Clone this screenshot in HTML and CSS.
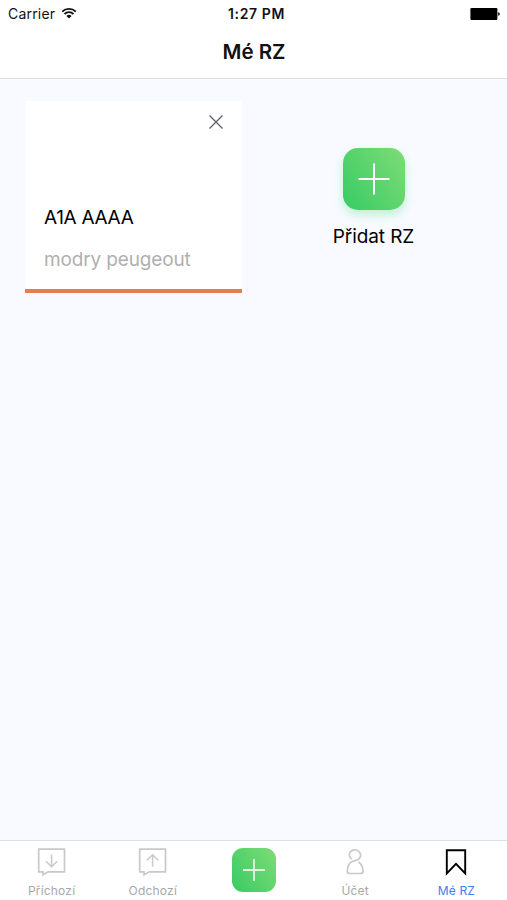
FILE: index.html
```html
<!DOCTYPE html>
<html lang="cs">
  <head>
    <meta charset="UTF-8" />
    <meta name="viewport" content="width=device-width, initial-scale=1.0" />
    <title>Mé RZ</title>
    <link rel="stylesheet" href="styles.css">
  </head>
  <body>
    <header class="header">
      <div class="status">
        <div class="carrier">
          <span>Carrier</span>
          <svg class="wifi" width="16" height="12" viewBox="0 0 16 12">
            <path d="M1.2 4.6a9.8 9.8 0 0 1 13.6 0M3.5 7a6.5 6.5 0 0 1 9 0" fill="none" stroke="#111" stroke-width="1.8" />
            <path d="M8 11.6 5.4 8.9a3.8 3.8 0 0 1 5.2 0z" fill="#111" />
          </svg>
        </div>
        <div class="time">1:27 PM</div>
        <div class="battery">
          <svg width="30" height="12" viewBox="0 0 30 12">
            <rect x="0.4" y="0" width="27" height="12" rx="1.2" fill="#000" />
            <path d="M28.2 4.2q1.6.3 1.6 1.8t-1.6 1.8z" fill="#000" />
          </svg>
        </div>
      </div>
      <h1 class="title">Mé RZ</h1>
    </header>

    <main class="content">
      <div class="card">
        <button class="close" aria-label="Smazat">
          <svg width="14" height="14" viewBox="0 0 14 14">
            <path d="M.5.5l13 13M13.5.5l-13 13" fill="none" stroke="#5d5f66" stroke-width="1.3" />
          </svg>
        </button>
        <div class="plate">A1A AAAA</div>
        <div class="note">modry peugeout</div>
      </div>
      <div class="add">
        <div class="add-icon">
          <svg width="32" height="32" viewBox="0 0 32 32">
            <path d="M16 .5v31M.5 16h31" stroke="#fff" stroke-width="2" />
          </svg>
        </div>
        <div class="add-label">Přidat RZ</div>
      </div>
    </main>

    <nav class="tabs">
      <a class="tab">
        <svg width="30" height="30" viewBox="0 0 30 30">
          <path d="M1.7 2.2h25.8v22.6H11.2L6 27.8v-3H1.7z" fill="none" stroke="#c9c9c9" stroke-width="1.7" />
          <path d="M14.6 7.600v12M9 14.200l5.600 5.500 5.600-5.500" fill="none" stroke="#c9c9c9" stroke-width="1.500" />
        </svg>
        <span>Příchozí</span>
      </a>
      <a class="tab">
        <svg width="30" height="30" viewBox="0 0 30 30">
          <path d="M1.7 2.2h25.8v22.6H11.2L6 27.8v-3H1.7z" fill="none" stroke="#c9c9c9" stroke-width="1.7" />
          <path d="M14.6 19.8v-12M9 13.2l5.6-5.5 5.6 5.5" fill="none" stroke="#c9c9c9" stroke-width="1.5" />
        </svg>
        <span>Odchozí</span>
      </a>
      <a class="tab tab-add">
        <div class="tab-add-icon">
          <svg width="22" height="22" viewBox="0 0 22 22">
            <path d="M11 0v22M0 11h22" stroke="#e0fadf" stroke-width="1.8" />
          </svg>
        </div>
      </a>
      <a class="tab">
        <svg width="30" height="30" viewBox="0 0 30 30">
          <path d="M11.7 12.2C9 9.9 8.7 6.7 10.5 4.6C12.5 2.3 16.5 2.2 18.8 4.3C21.2 6.6 21.2 10.2 18.7 12.2C17 13.7 14.5 13.4 12.2 14.5C8.800 16 7.400 19.500 7.300 24.500Q7.300 26.500 9.500 26.500H20.500Q23 26.500 23 24.500C23 20.500 21.800 17.200 18.500 15" fill="none" stroke="#c9c9c9" stroke-width="1.7" />
        </svg>
        <span>Účet</span>
      </a>
      <a class="tab active">
        <svg width="30" height="30" viewBox="0 0 30 30">
          <path d="M5.8 3.2h18.4v23.2L15 16.8 5.8 26.4z" fill="none" stroke="#000" stroke-width="1.9" />
        </svg>
        <span>Mé RZ</span>
      </a>
    </nav>
  </body>
</html>
```
FILE: styles.css
```css
* {
  box-sizing: border-box;
}

body {
  margin: 0;
  height: 100vh;
  display: flex;
  flex-direction: column;
  font-family: Inter, "Liberation Sans", sans-serif;
  background-color: #f8faff;
  color: #111;
}

.header {
  height: 79px;
  background-color: #fff;
  border-bottom: 1px solid #dcdee2;
}

.status {
  display: grid;
  grid-template-columns: 1fr auto 1fr;
  align-items: center;
  height: 27px;
  padding: 0 7px 0 8px;
  font-size: 14px;
}

.carrier {
  display: flex;
  align-items: center;
  gap: 6px;
  letter-spacing: 0.2px;
}

.wifi {
  margin-bottom: 2px;
}

.time {
  padding-left: 5px;
  font-weight: 600;
  letter-spacing: 0.6px;
}

.battery {
  display: flex;
  justify-content: flex-end;
}

.title {
  margin: 0;
  padding-left: 1px;
  font-size: 20.5px;
  font-weight: 600;
  line-height: 50px;
  text-align: center;
}

.content {
  flex: 1;
  display: grid;
  grid-template-columns: 217px 217px;
  gap: 24px;
  align-content: start;
  padding: 22px 25px;
}

.card {
  height: 192px;
  padding: 14px 19px 0 19px;
  background-color: #fff;
  border-bottom: 4px solid #e08050;
}

.close {
  display: block;
  margin-left: auto;
  padding: 0;
  border: 0;
  background: none;
  height: 14px;
}

.plate {
  margin-top: 77px;
  font-size: 19px;
  line-height: 24px;
  letter-spacing: -0.3px;
  color: #000;
  white-space: nowrap;
}

.note {
  margin-top: 18px;
  font-size: 19px;
  line-height: 24px;
  letter-spacing: -0.15px;
  color: #b0b0b0;
  white-space: nowrap;
}

.add {
  display: flex;
  flex-direction: column;
  align-items: center;
  padding: 47px 2px 0 0;
}

.add-icon,
.tab-add-icon {
  display: flex;
  align-items: center;
  justify-content: center;
  background: linear-gradient(55deg, #37cb65, #7edc75);
}

.add-icon {
  width: 62px;
  height: 62px;
  border-radius: 15px;
  box-shadow: 0 5px 10px rgba(60, 220, 120, 0.3);
}

.add-label {
  margin-top: 15px;
  font-size: 19px;
  line-height: 24px;
  letter-spacing: -0.1px;
  color: #000;
}

.tabs {
  display: grid;
  grid-template-columns: repeat(5, 1fr);
  height: 60px;
  padding-left: 1px;
  background-color: #fff;
  border-top: 1px solid #dcdee2;
}

.tab {
  display: flex;
  flex-direction: column;
  align-items: center;
  padding-top: 6px;
  font-size: 12px;
  line-height: 16px;
  letter-spacing: 0.2px;
  color: #a8a8a8;
}

.tab span {
  margin-top: 6px;
}

.tab-add {
  padding-top: 7px;
}

.tab-add-icon {
  width: 44px;
  height: 44px;
  border-radius: 11px;
}

.active {
  color: #4080f0;
}
```
